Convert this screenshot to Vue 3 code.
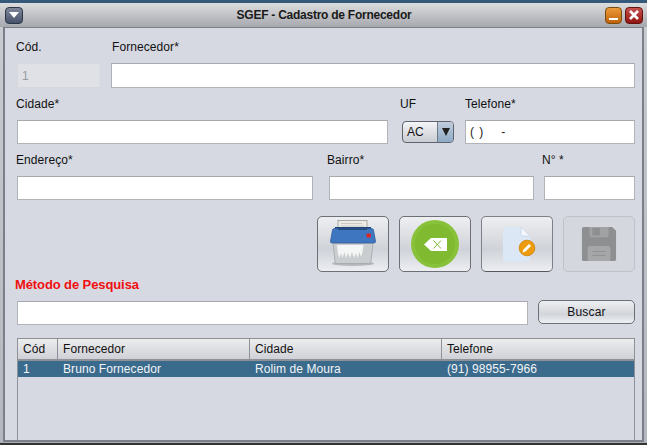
<script setup>
const columns = [
  { label: 'Cód', cls: 'c1' },
  { label: 'Fornecedor', cls: 'c2' },
  { label: 'Cidade', cls: 'c3' },
  { label: 'Telefone', cls: 'c4' }
]
const row = ['1', 'Bruno Fornecedor', 'Rolim de Moura', '(91) 98955-7966']
</script>

<template>
  <div class="window">
    <header class="titlebar">
      <div class="menu-btn"><svg width="10" height="6" viewBox="0 0 10 6"><path d="M0 0h10L5 6z" fill="#fff" /></svg></div>
      <div class="title">SGEF - Cadastro de Fornecedor</div>
      <div class="win-btn min"><span class="dash"></span></div>
      <div class="win-btn close">
        <svg width="12" height="12" viewBox="0 0 12 12"><path d="M2 2l8 8M10 2l-8 8" stroke="#fff" stroke-width="2.600" /></svg>
      </div>
    </header>
    <main class="content">
      <div class="row labels r1">
        <span class="w-cod">Cód.</span>
        <span class="grow">Fornecedor*</span>
      </div>
      <div class="row fields f1">
        <div class="input disabled w-cod">1</div>
        <div class="input grow"></div>
      </div>

      <div class="row labels r2">
        <span class="w-cidade">Cidade*</span>
        <span class="w-uf">UF</span>
        <span class="grow">Telefone*</span>
      </div>
      <div class="row fields f2">
        <div class="input w-cidade"></div>
        <div class="combo">
          <span class="combo-text">AC</span>
          <span class="combo-arrow"><svg width="8" height="8" viewBox="0 0 8 8"><path d="M0 0h8L4 8z" fill="#222" /></svg></span>
        </div>
        <div class="input grow mask"><span>( )</span><span class="dash-mask">-</span></div>
      </div>

      <div class="row labels r3">
        <span class="w-end">Endereço*</span>
        <span class="w-bairro">Bairro*</span>
        <span class="grow">N° *</span>
      </div>
      <div class="row fields f3">
        <div class="input w-end"></div>
        <div class="input w-bairro"></div>
        <div class="input grow"></div>
      </div>

      <div class="toolbar">
        <button class="tool">
          <svg width="50" height="50" viewBox="0 0 50 50">
            <ellipse cx="25" cy="44.500" rx="21" ry="2.500" fill="#8f9296" opacity=".55" />
            <path d="M5 24h40l-2 18.500a2.500 2.500 0 0 1-2.500 2H9.500a2.500 2.500 0 0 1-2.500-2z" fill="#c9cdcf" stroke="#a3a7aa" stroke-width=".8" />
            <path d="M9 26l1 9 1.500 4 1.500-5 1.500 5 2-6 1.500 6 2-5 2 5 2-6 2 6 2-5 1.500 5 2-6 1.500 5 1.500-5 1-7z" fill="#f4f5f5" />
            <rect x="10" y="1.500" width="29" height="10" fill="#ecebe5" stroke="#8f8f89" stroke-width=".7" />
            <path d="M13 4.500h21M13 7h23" stroke="#c2c2bc" stroke-width=".8" />
            <rect x="7" y="8" width="36" height="3" fill="#1f4478" />
            <path d="M2.500 22l2-11q.3-1.500 2-1.500h37q1.700 0 2 1.500l2 11q.3 2-1.500 2H4q-1.800 0-1.500-2z" fill="#3f76c0" stroke="#2a5797" stroke-width=".7" />
            <rect x="10" y="9.500" width="29" height="1.500" fill="#24497f" />
            <rect x="38.500" y="14.500" width="4.500" height="4" rx="1" fill="#dc2529" />
          </svg>
        </button>
        <button class="tool">
          <svg width="48" height="48" viewBox="0 0 48 48">
            <circle cx="24" cy="24" r="24" fill="#88c23a" />
            <circle cx="24" cy="24" r="20" fill="#7fba30" />
            <path d="M13 24.500l7-6.500h16v13H20z" fill="#fff" />
            <path d="M22.500 20.500l7.500 8M30 20.500l-7.500 8" stroke="#7fba30" stroke-width="1" />
          </svg>
        </button>
        <button class="tool focus">
          <svg width="50" height="50" viewBox="0 0 50 50">
            <path d="M11 11a3 3 0 0 1 3-3h15l9 9v23a3 3 0 0 1-3 3H14a3 3 0 0 1-3-3z" fill="#dbe7f5" />
            <path d="M29 8v7a2 2 0 0 0 2 2h7z" fill="#f3f7fb" stroke="#c3d3e6" stroke-width=".7" />
            <circle cx="35" cy="29" r="7.800" fill="#ee9c0e" stroke="#cf8106" stroke-width=".8" />
            <path d="M30.500 33.500l1-3 5.500-5.500 2 2-5.500 5.500z" fill="#fff" />
          </svg>
        </button>
        <button class="tool off">
          <svg width="36" height="36" viewBox="0 0 38 38">
            <path d="M3 1h30l4 4v30a2 2 0 0 1-2 2H3a2 2 0 0 1-2-2V3a2 2 0 0 1 2-2z" fill="#8e8f91" />
            <path d="M9 1h20v9a2 2 0 0 1-2 2H11a2 2 0 0 1-2-2z" fill="#a1a2a4" />
            <rect x="12" y="2" width="8" height="8" fill="#8e8f91" />
            <path d="M7 37V24a3 3 0 0 1 3-3h18a3 3 0 0 1 3 3v13z" fill="#a6a7a9" />
            <path d="M12 27h14M12 31h14" stroke="#8e8f91" />
          </svg>
        </button>
      </div>

      <div class="search-title">Método de Pesquisa</div>
      <div class="row search">
        <div class="input grow"></div>
        <button class="buscar">Buscar</button>
      </div>

      <section class="table">
        <div class="thead">
          <div v-for="c in columns" :key="c.label" class="th" :class="c.cls">{{ c.label }}</div>
        </div>
        <div class="tr">
          <div v-for="(v, i) in row" :key="v" class="td" :class="columns[i].cls">{{ v }}</div>
        </div>
      </section>
    </main>
    <div class="bottom"></div>
  </div>
</template>

<style>
html, body { margin: 0; padding: 0; background: #d6d9e1; }
</style>

<style scoped>
.window {
  width: 647px;
  height: 445px;
  box-sizing: border-box;
  display: flex;
  flex-direction: column;
  overflow: hidden;
  background: linear-gradient(#c9ccd0, #b4b7bd);
  border-top: 3px solid #34597a;
  font-family: "Liberation Sans", Arial, sans-serif;
  font-size: 12px;
  letter-spacing: .08px;
  color: #111;
}
.titlebar {
  height: 24px;
  flex: none;
  display: flex;
  align-items: center;
  padding: 0 4px 0 5px;
  background: linear-gradient(#dcddde, #a6a8ae);
}
.menu-btn {
  width: 18px;
  height: 17px;
  box-sizing: border-box;
  border: 1px solid #2d3646;
  border-radius: 4px;
  background: linear-gradient(#7e8799, #47536c);
  display: flex;
  align-items: center;
  justify-content: center;
}
.title {
  flex: 1;
  text-align: center;
  font-weight: bold;
  color: #1a1a1a;
  font-size: 12px;
  letter-spacing: -.25px;
  padding-left: 23px;
}
.win-btn {
  width: 17px;
  height: 17px;
  box-sizing: border-box;
  border-radius: 4px;
  margin-left: 3px;
  display: flex;
  align-items: center;
  justify-content: center;
}
.min {
  background: linear-gradient(#eb9a3c, #c06308);
  border: 1px solid #7c4b10;
}
.dash { width: 9px; height: 2px; background: #fff; margin-top: 8px; }
.close {
  width: 18px;
  background: linear-gradient(#c8514e, #93130f);
  border: 1px solid #5f1410;
}
.content {
  flex: 1;
  margin: 0 3px;
  box-sizing: border-box;
  border: 1px solid #7b7f8a;
  border-width: 1px 2px 2px 2px;
  background: #d6d9e1;
  padding: 0 7px 0 12px;
  display: flex;
  flex-direction: column;
  min-height: 0;
}
.bottom { height: 3px; flex: none; background: #a9acb2; border-bottom: 2px solid #333; box-sizing: border-box; }
.row { display: flex; }
.labels { align-items: center; height: 14px; }
.r1 { margin-top: 12px; }
.r2 { margin-top: 9px; }
.r3 { margin-top: 9px; }
.fields { height: 25px; }
.f1 { margin-top: 9px; }
.f2 { margin-top: 9px; height: 24px; }
.f3 { margin-top: 9px; height: 24px; }
.labels span:first-child { margin-left: -1px; }
.labels span { flex-shrink: 0; }
.grow { flex: 1; }
.w-cod { width: 84px; margin-right: 10px; }
.labels .w-cod { margin-right: 12px; }
.w-cidade { width: 371px; margin-right: 14px; }
.w-uf { width: 65px; }
.labels .w-cidade { margin-right: 13px; }
.w-end { width: 296px; margin-right: 16px; }
.w-bairro { width: 205px; margin-right: 10px; }
.labels .w-end { width: 311px; margin-right: 0; }
.labels .w-bairro { width: 215px; margin-right: 0; }
.input {
  box-sizing: border-box;
  background: #fff;
  border: 1px solid #b0b3b8;
  border-top-color: #a6a8ad;
  height: 100%;
  padding: 0 4px;
  display: flex;
  align-items: center;
  color: #222;
}
.disabled {
  background: #dfe1e6;
  border-color: #d4d7dc;
  color: #9a9da3;
}
.combo {
  width: 52px;
  height: 22px;
  box-sizing: border-box;
  margin: 1px 11px 0 0;
  border: 1px solid #5f646e;
  border-radius: 4px;
  display: flex;
  overflow: hidden;
  background: linear-gradient(#f4f5f7, #c9ccd2);
}
.combo-text { flex: 1; padding-left: 4px; line-height: 20px; }
.combo-arrow {
  width: 15px;
  display: flex;
  align-items: center;
  justify-content: center;
  border-left: 1px solid #6f7a88;
  background: linear-gradient(#c1cedd, #8eaac6);
}
.mask { letter-spacing: 1px; }
.dash-mask { margin-left: 17px; }
.toolbar {
  display: flex;
  justify-content: flex-end;
  gap: 10px;
  margin-top: 16px;
}
.tool {
  width: 72px;
  height: 56px;
  box-sizing: border-box;
  padding: 0;
  border: 1px solid #6c6f75;
  border-radius: 5px;
  background: linear-gradient(#eeeff1, #cfd2d8 60%, #eceef2);
  display: flex;
  align-items: center;
  justify-content: center;
}
.focus { border-color: #7d8087; border-bottom-color: #55585e; }
.off {
  background: #d4d7de;
  border-color: #bfc2c8;
}
.search-title {
  color: #f01010;
  font-weight: bold;
  font-size: 13px;
  letter-spacing: -.1px;
  height: 16px;
  line-height: 16px;
  margin: 5px 0 0 -2px;
}
.search { margin-top: 8px; height: 24px; }
.search .input { flex: 0 0 511px; margin-right: 10px; }
.buscar {
  width: 97px;
  height: 24px;
  margin-top: -1px;
  box-sizing: border-box;
  padding: 0;
  border: 1px solid #6c6f75;
  border-radius: 5px;
  background: linear-gradient(#eeeff1, #d2d5db 60%, #eef0f4);
  font: 12px "Liberation Sans", Arial, sans-serif;
  letter-spacing: .2px;
  color: #111;
}
.table {
  margin-top: 13px;
  flex: 1;
  box-sizing: border-box;
  border: 1px solid #8e9198;
  border-bottom: 0;
  min-height: 0;
}
.thead {
  display: flex;
  height: 22px;
  box-sizing: border-box;
  border-bottom: 2px solid #8e9198;
  background: linear-gradient(#eceded, #cfd1d7);
}
.th {
  box-sizing: border-box;
  padding-left: 5px;
  line-height: 20px;
  border-right: 1px solid #8e9198;
}
.th:last-child { border-right: 0; }
.tr {
  display: flex;
  height: 16px;
  background: #3a6b8d;
  color: #f2f4f6;
}
.td { box-sizing: border-box; padding-left: 5px; line-height: 16px; }
.c1 { width: 40px; }
.c2 { width: 192px; }
.c3 { width: 192px; }
.c4 { flex: 1; }
</style>
